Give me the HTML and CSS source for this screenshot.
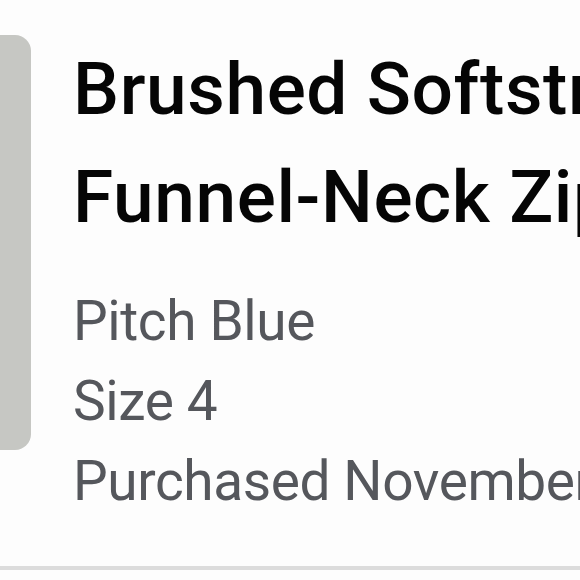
FILE: index.html
```html
<!DOCTYPE html>
<html lang="en">
<head>
<meta charset="utf-8">
<link rel="stylesheet" href="styles.css">
</head>
<body>
<div class="item">
  <div class="thumb"></div>
  <div class="info">
    <h2 class="title"><span class="line">Brushed Softstretch</span><span class="line">Funnel-Neck Zip-Up Jacket</span></h2>
    <p class="meta">Pitch Blue</p>
    <p class="meta">Size 4</p>
    <p class="meta">Purchased November 12, 2023</p>
  </div>
</div>
<div class="divider"></div>
</body>
</html>
```
FILE: styles.css
```css
html, body {
  margin: 0;
  padding: 0;
  background: #fdfdfd;
  width: 580px;
  height: 580px;
  overflow: hidden;
  font-family: "Roboto", "Noto Sans", sans-serif;
}
.item {
  display: flex;
  align-items: flex-start;
  gap: 42px;
  padding-top: 35px;
  height: 531px;
  box-sizing: border-box;
  overflow: hidden;
}
.thumb {
  flex: 0 0 auto;
  width: 60px;
  height: 415px;
  margin-left: -29px;
  background: #c6c7c3;
  border-radius: 16px;
}
.info {
  flex: 0 0 auto;
  white-space: nowrap;
}
.title {
  margin: 0 0 30px;
  font-size: 73px;
  line-height: 108px;
  font-weight: 500;
  letter-spacing: 0.6px;
  color: #050505;
}
.line {
  display: block;
}
.meta {
  margin: 0;
  font-size: 55px;
  line-height: 80px;
  font-weight: 400;
  letter-spacing: -0.4px;
  color: #55575c;
}
.divider {
  height: 4px;
  margin-top: 35px;
  background: #dcdcdc;
}
```
